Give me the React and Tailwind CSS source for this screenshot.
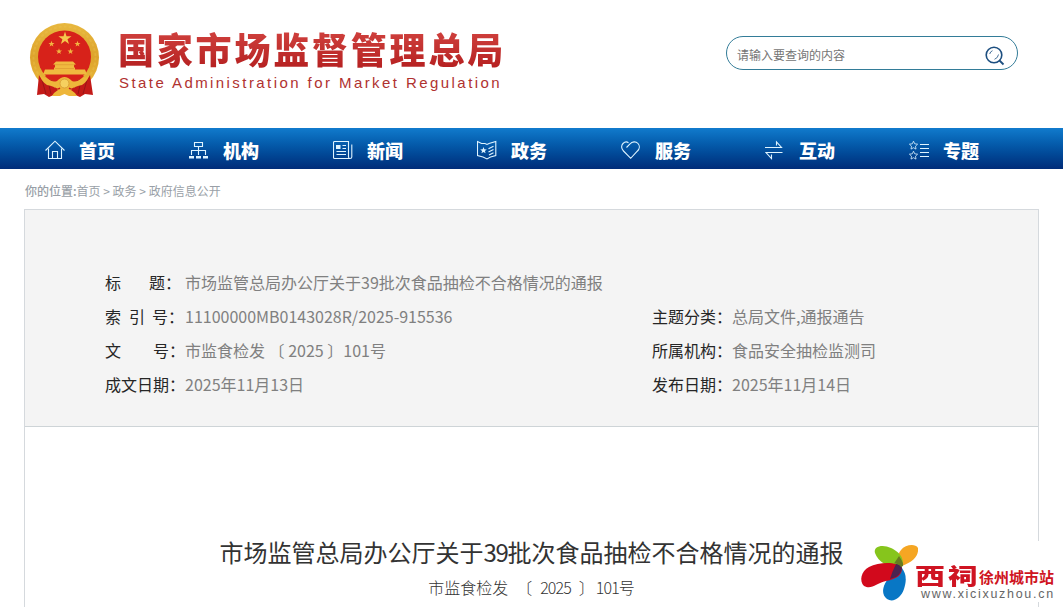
import React from 'react';

const stroke = { fill: 'none', stroke: '#dff4ff', strokeWidth: 1.1 };

const icons = {
  home: (
    <g {...stroke}>
      <path d="M0.5 10.5 10 1.2 19.5 10.5" />
      <path d="M3.5 8.5V18.5H16.5V8.5M7.5 18.5V11.5H12.5V18.5" />
    </g>
  ),
  org: (
    <g {...stroke}>
      <path d="M5.5 2.5H13.5V6.500H5.500ZM9.500 6.500V15M2.500 15V10.500H16.500V15" />
      <path d="M0 17.200H5M7 17.200H12M14 17.200H19" strokeWidth="2.6" />
    </g>
  ),
  news: (
    <g {...stroke}>
      <path d="M17.5 18.5H1.5Q0.5 18.5 0.5 17.5V2.5Q0.5 1.5 1.5 1.5H15.5V17Q15.5 18.5 17 18.5Q18.8 18.5 18.8 17V4.5" />
      <path d="M9.5 5.5H13M9.5 8.5H13M3.5 11.5H13M3.5 14.5H13" />
      <path d="M3 5H7.5V9H3Z" fill="#dff4ff" stroke="none" />
    </g>
  ),
  affairs: (
    <g {...stroke}>
      <path d="M0.500 1.500 4.500 3.500H8L10 4.500 12 3.500 18.800 1.500V15.500L13.500 17 10 19 6 17 0.500 15.500Z" />
      <path d="M11.500 8.800 16.500 6.200M11.500 12 16.500 9.500M12 15 16.500 12.800" />
      <path d="m6.5 7 .9 2.3 2.4.1-1.9 1.5.7 2.4-2.1-1.4-2.1 1.4.7-2.4-1.9-1.5 2.4-.1Z" fill="#dff4ff" stroke="none" />
    </g>
  ),
  heart: (
    <g {...stroke}>
      <path d="M5.500 7.500 9 4C11 1.200 15 1.300 17 3.500 19 5.800 18.500 9 16.500 11L9.700 18.300 2.500 11C.300 8.800 0 5.500 2 3.500 3.600 1.900 6 1.700 7.500 2.700" />
    </g>
  ),
  interact: (
    <g {...stroke}>
      <path d="M0 7.500H16.500L11.500 2V5.500M17.500 12.500H1L6.500 18.500V14.500" />
    </g>
  ),
  topic: (
    <g {...stroke}>
      <path strokeWidth="0.800" d="m4.500 1.200 1.200 2.600 2.900.4-2.100 2 .5 2.900L4.500 7.700 2 9.100 2.500 6.200.4 4.200l2.900-.4ZM4.500 11.200l1.200 2.600 2.900.4-2.100 2 .5 2.900L4.500 17.700l-2.500 1.400.5-2.900-2.100-2 2.900-.4Z" />
      <path d="M11 4.500H20M11 8.500H20M11 12.500H20M11 16.500H20" />
    </g>
  ),
};

const nav = [
  ['home', '首页'],
  ['org', '机构'],
  ['news', '新闻'],
  ['affairs', '政务'],
  ['heart', '服务'],
  ['interact', '互动'],
  ['topic', '专题'],
];

function Emblem() {
  return (
    <svg className="mt-[21px] h-[78px] w-[72px] shrink-0" viewBox="0 0 72 78">
      <defs>
        <linearGradient id="gold" x1="0" y1="0" x2="0" y2="1">
          <stop offset="0" stopColor="#e8b83f" />
          <stop offset="0.5" stopColor="#dda32c" />
          <stop offset="1" stopColor="#edbd3c" />
        </linearGradient>
      </defs>
      <circle cx="35.500" cy="36.500" r="34.500" fill="url(#gold)" />
      <circle cx="35.500" cy="36.500" r="31" fill="none" stroke="#efc657" strokeWidth="2" strokeDasharray="3 2" opacity="0.3" />
      <circle cx="35.500" cy="36" r="26.500" fill="#d7221a" />
      <path d="M10 54Q12 59 19 57L27 61H44L52 57Q59 59 61 54L64 74 56 73 51 76 44 73H27L20 76 15 73 8 74Z" fill="#c31a18" />
      <path d="M13 59 17 73M19 60 22 73M58 59 54 73M52 60 49 73" stroke="#981515" strokeWidth="1" />
      <path d="M36 10.500 37.500 15.300H42.500L38.500 18.200 40 23 36 20.100 31.900 23 33.400 18.200 29.400 15.300H34.500Z" fill="#f5c64d" />
      {[[22.5, 23], [48.5, 23], [30, 30.5], [41.5, 30.5]].map(([x, y]) => (
        <path key={x} transform={`translate(${x} ${y})`} d="M0-3.200.8-1H3L1.200.400 1.900 2.600 0 1.300-1.900 2.600-1.200.400-3-1H-.8Z" fill="#f2b541" />
      ))}
      <path d="M27 40.500H44L47 43.500H24ZM26 43H45V47H26ZM25 46.500H46V48.500H56L58 53.500H14L16 48.500H25Z" fill="#f0b93f" />
      <path d="M25 43.700H46M26 47.500H45" stroke="#dc9a30" strokeWidth="0.700" />
      <path d="M16 55H55L52 58H44L40 57H31L27 58H19Z" fill="#d7221a" />
      <path d="M11 55Q14 57 18 57 24 62 28 60 32 56 35.500 56 39 56 43 60 47 62 53 57 57 57 60 55 58 61 53 64 46 65 42 69L46 72 48 75H40L35.500 73 31 75H23L25 72 29 69Q25 65 18 64 13 61 11 55Z" fill="#eeb63a" />
      <circle cx="35.500" cy="62.500" r="4.500" fill="#f6d05f" stroke="#dca138" />
      <path d="M26 67Q29 69 31 67M45 67Q42 69 40 67" fill="none" stroke="#c51c18" strokeWidth="1.200" />
    </svg>
  );
}

function Row({ label, children }) {
  return (
    <div className="flex h-[34px] items-center whitespace-nowrap">
      <div className="flex w-[80px] shrink-0 text-[#262626]">{label}</div>
      <div className="text-[#808080]">{children}</div>
    </div>
  );
}

function SiteBadge() {
  return (
    <div className="absolute top-[541px] left-[856px] flex h-[61px] w-[207px] bg-white">
      <svg className="h-[61px] w-[62px] shrink-0" viewBox="0 0 62 61">
        <path d="M46 25C41 23 40 15 45 9 49 4 59 2 62 7 63 15 57 21 46 25Z" fill="#f5a623" />
        <path d="M45 27C34 28 22 21 19 12 17 5 27 3 35 7 44 11 50 19 45 27Z" fill="#86c51c" />
        <path d="M46 27C50 33 51 38 48 48 45 57 37 62 31 58 24 53 27 42 35 35Z" fill="#0877c5" />
        <path d="M46 27C46 34 41 38 30 40 20 42 16 49 8 45 3 40 5 30 13 26 23 21 41 20 46 27Z" fill="#d2091c" />
        <path d="M40 23Q45 23 46 27 45 33 40 36L34 38Q36 31 40 23Z" fill="#4b2350" />
        <path d="M38 22.500Q42 22 45 26L47 25Q48 22 43 15Z" fill="#687b20" />
      </svg>
      <div className="min-w-0 flex-1 whitespace-nowrap">
        <div className="flex h-[46px] items-end text-[#cf1422]">
          <span className="mb-[4px] ml-[-3px] flex h-[18px] w-[64px] origin-left scale-x-[1.36] items-center text-[22px] leading-[18px] font-black tracking-[2px]">西祠</span>
          <span className="mb-px flex h-[18px] items-center text-[15px] leading-[18px] font-bold">徐州城市站</span>
        </div>
        <div className="ml-[3px] pt-px font-['Liberation_Sans',Arial,sans-serif] text-[12.5px] leading-[13px] font-normal tracking-[1.7px] text-[#666]">www.xicixuzhou.cn</div>
      </div>
    </div>
  );
}

export default function App() {
  return (
    <div className="relative flex h-[607px] w-[1063px] flex-col overflow-hidden bg-white font-['Noto_Sans_CJK_SC',sans-serif]">
      <header className="flex h-[128px] shrink-0 pl-[29px]">
        <Emblem />
        <div className="ml-[17px] w-[400px] pt-[27px] whitespace-nowrap">
          <h1 className="bg-gradient-to-b from-[#d24340] to-[#b51f20] bg-clip-text text-[36px] leading-[42px] font-black tracking-[2.8px] text-transparent">国家市场监督管理总局</h1>
          <p className="ml-[1px] pt-[4px] font-['Liberation_Sans',Arial,sans-serif] text-[15px] leading-[20px] tracking-[2.43px] text-[#b03230]">State Administration for Market Regulation</p>
        </div>
        <div className="mt-[36px] ml-[208px] flex h-[34px] w-[292px] items-center justify-between rounded-full border border-[#337c98] pr-[12px] pl-[10px]">
          <span className="pt-[3px] text-[12px] text-[#757575]">请输入要查询的内容</span>
          <svg className="mt-[5px] h-[20px] w-[20px]" viewBox="0 0 20 20" fill="none" stroke="#1d4f80">
            <circle cx="9" cy="9" r="7.800" strokeWidth="1.600" />
            <path d="m14.500 14.500 4 4" strokeWidth="1.800" />
            <path d="M13.500 8.500Q13 12 9.500 13.300M4.700 8Q5.300 5.500 7.500 4.700" strokeWidth="0.800" />
          </svg>
        </div>
      </header>

      <nav className="flex h-[41px] shrink-0 bg-gradient-to-b from-[#117bcd] to-[#012c79] pl-[45px]">
        {nav.map(([icon, text]) => (
          <a key={icon} className="flex w-[144px] shrink-0 items-center">
            <svg className="mt-[3px] h-[20px] w-[21px]" viewBox="0 0 21 20">{icons[icon]}</svg>
            <span className="ml-[13px] pt-[2px] text-[18px] leading-[26px] font-black text-white">{text}</span>
          </a>
        ))}
      </nav>

      <div className="flex h-[40px] shrink-0 items-center pt-[4px] pl-[25px] text-[12px] whitespace-pre text-[#999fa7]">
        <span className="font-medium">你的位置:</span>
        <span>首页 &gt; 政务 &gt; 政府信息公开</span>
      </div>

      <main className="mx-[24px] flex flex-1 flex-col border-x border-t border-[#d5d9dd]">
        <section className="flex h-[217px] shrink-0 border-b border-[#ced4d7] bg-[#f4f4f4] pt-[55px] pl-[80px] text-[16px] leading-[24px]">
          <div className="w-[547px]">
            <Row label={<><span>标</span><span className="ml-[28px]">题：</span></>}>市场监管总局办公厅关于39批次食品抽检不合格情况的通报</Row>
            <Row label={<><span>索</span><span className="ml-[8px]">引</span><span className="ml-[7px]">号：</span></>}>11100000MB0143028R/2025-915536</Row>
            <Row label={<><span>文</span><span className="ml-[32px]">号：</span></>}>市监食检发 〔 2025 〕101号</Row>
            <Row label="成文日期：">2025年11月13日</Row>
          </div>
          <div className="pt-[34px]">
            <Row label="主题分类：">总局文件,通报通告</Row>
            <Row label="所属机构：">食品安全抽检监测司</Row>
            <Row label="发布日期：">2025年11月14日</Row>
          </div>
        </section>
        <article className="flex flex-1 flex-col items-center pt-[107px] whitespace-nowrap text-[#333]">
          <h2 className="text-[24px] leading-[36px]">市场监管总局办公厅关于<span className="tracking-[-1.3px]">39</span>批次食品抽检不合格情况的通报</h2>
          <p className="flex pt-[5px] text-[16px] leading-[24px] font-light">
            <span>市监食检发</span>
            <span className="ml-[8px]">〔</span>
            <span className="ml-[8px] tracking-[-0.9px]">2025</span>
            <span className="ml-[8px]">〕</span>
            <span className="ml-px tracking-[-0.9px]">101</span>
            <span>号</span>
          </p>
        </article>
      </main>
      <SiteBadge />
    </div>
  );
}
